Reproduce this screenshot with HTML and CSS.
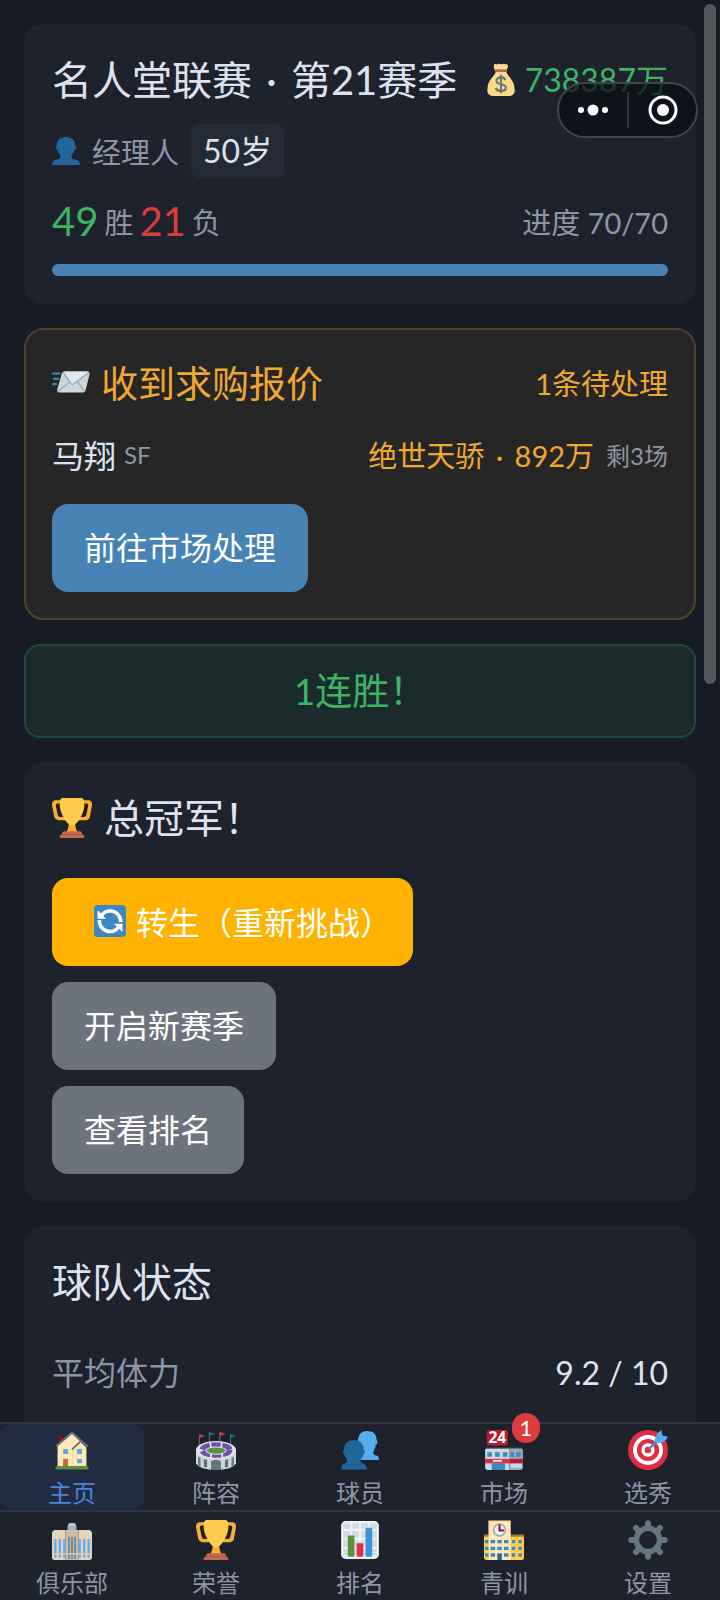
FILE: index.html
```html
<!DOCTYPE html>
<html lang="zh-CN">
<head>
    <meta charset="UTF-8">
    <meta name="viewport" content="width=device-width, initial-scale=1.0">
    <title>名人堂联赛</title>
    <link rel="stylesheet" href="styles.css">
</head>
<body>

<!-- shared icons -->
<svg class="sprite" aria-hidden="true">
    <symbol id="icon-trophy" viewBox="0 0 36 36">
        <path fill="#FFAC33" d="M5.123 5h6C12.227 5 13 4.896 13 6V4c0-1.104-.773-2-1.877-2h-8c-2 0-3.583 2.125-3 5 0 0 1.791 9.375 1.917 9.958C2.373 18.5 4.164 20 6.081 20h6.958c1.105 0-.039-1.896-.039-3v-2c0 1.104-.773 2-1.877 2h-4c-1.104 0-1.833-1.042-2-2S3.539 7.667 3.539 7.667C3.206 5.75 4.018 5 5.123 5zm25.812 0h-6C23.831 5 22 4.896 22 6V4c0-1.104 1.831-2 2.935-2h8c2 0 3.584 2.125 3 5 0 0-1.633 9.419-1.771 10-.354 1.5-2.042 3-4 3h-7.146C21.914 20 22 18.104 22 17v-2c0 1.104 1.831 2 2.935 2h4c1.104 0 1.834-1.042 2-2s1.584-7.333 1.584-7.333C32.851 5.75 32.04 5 30.935 5zM20.832 22c0-6.958-2.709 0-2.709 0s-3-6.958-3 0-3.291 10-3.291 10h12.292c-.001 0-3.292-3.042-3.292-10z"/>
        <path fill="#FFCC4D" d="M29.123 6.577c0 6.775-6.77 18.423-11.123 18.423-4.35 0-11-11.648-11-18.423C7 3.058 7 0 10 0h16c3 0 3.123 3.058 3.123 6.577z"/>
        <path fill="#C1694F" d="M27 33H9v-1c0-1.104 1.164-2 2.206-2h13.917c1.042 0 1.877.896 1.877 2v1z"/>
        <path fill="#C1694F" d="M29 36H7v-1.625C7 33.615 7.738 33 8.498 33h19.25c.759 0 1.252.615 1.252 1.375z"/>
    </symbol>
</svg>

<main class="page">
    <section class="card">
        <div class="row">
            <h1 class="title">名人堂联赛 <span class="dot">·</span> 第21赛季</h1>
            <div class="money">
                <svg class="icon-32" viewBox="0 0 36 36" aria-hidden="true">
                    <path fill="#FDD888" d="M12 9c-1 4-9 10-9 17 0 2-1 4 0 6 1 3 4 4 7 4h16c4 0 6-1 7-4 1-2 0-4 0-6 0-7-8-13-9-17z"/>
                    <path fill="#FDD888" d="M11 7c-1-3-2-6 0-7 2 0 2 1 4 0s3 1 5 0 3 1 4 0c3 1 2 4 0 7z"/>
                    <rect x="11" y="6" width="14" height="3" rx="1.5" fill="#BF6952"/>
                    <path fill="none" stroke="#67757F" stroke-width="2.4" d="M23 18c-1-2-3-3-5-3-3 0-5 1.500-5 4 0 5 10.500 2.500 10.500 7.500 0 2.500-2.500 4-5.500 4-3 0-5-1-6-3.500M18 12v21"/>
                </svg>
                <span>738387万</span>
            </div>
        </div>
        <div class="manager">
            <svg class="icon-28" viewBox="0 0 36 36" aria-hidden="true">
                <path fill="#226699" d="M18 0c8 0 12 5 12 11 1 0 2 1 1 3s-2 3-2 3c-1 4-4 6-4 8 0 3 2 3 5 4 4 1 6 3 6 7H0c0-4 2-6 6-7 3-1 5-1 5-4 0-2-3-4-4-8 0 0-1-1-2-3s0-3 1-3C6 5 10 0 18 0z"/>
            </svg>
            <span>经理人</span>
            <span class="age">50岁</span>
        </div>
        <div class="row record">
            <div class="wins">
                <span class="num green">49</span>
                <span>胜</span>
                <span class="num red">21</span>
                <span>负</span>
            </div>
            <span>进度 70/70</span>
        </div>
        <div class="bar"><div class="bar-fill" style="width: 100%"></div></div>
    </section>

    <section class="card offer">
        <div class="row offer-head">
            <h2 class="offer-title">
                <svg class="icon-38" viewBox="0 0 36 36" aria-hidden="true">
                    <path stroke="#3B88C3" stroke-width="2" stroke-linecap="round" d="M1 10h6M2 15h4M1 20h3"/>
                    <path fill="#CCD6DD" d="M12 8h21c2 0 3 1 2.500 3l-3.500 14c-.5 2-1.500 3-3.500 3H8c-2 0-3.500-1-3-3L9 11c.5-2 1-3 3-3z"/>
                    <path fill="#E1E8ED" d="M11 8h22c1 0 2 .5 2.500 1L21 20c-1 .8-2 .8-3 0z"/>
                    <path fill="none" stroke="#99AAB5" stroke-width="1.3" d="M10.500 9L18 19.500c.8 1 2 1 3 0L35 9M5.500 27l11-9M31 27l-7-9.500"/>
                </svg>
                收到求购报价
            </h2>
            <span>1条待处理</span>
        </div>
        <div class="row offer-item">
            <div class="player">马翔 <small>SF</small></div>
            <div class="price"><span>绝世天骄 <span class="dot">·</span> 892万</span> <small>剩3场</small></div>
        </div>
        <button class="btn blue">前往市场处理</button>
    </section>

    <section class="streak">1连胜！</section>

    <section class="card">
        <h2 class="title champion"><svg class="icon-40" aria-hidden="true"><use href="#icon-trophy"/></svg>总冠军！</h2>
        <div class="actions">
            <button class="btn gold">
                <svg class="icon-32" viewBox="0 0 36 36" aria-hidden="true">
                    <rect width="36" height="36" rx="4" fill="#3B88C3"/>
                    <path fill="none" stroke="#FFF" stroke-width="4" d="M8 13c4-9 19-9 22 4v2M6 17c0 13 15 17 22 7.500"/>
                    <path fill="#FFF" d="M4 6v9.500h9.500zM32 30.500V21h-9.500z"/>
                </svg>
                转生（重新挑战）
            </button>
            <button class="btn">开启新赛季</button>
            <button class="btn">查看排名</button>
        </div>
    </section>

    <section class="card status">
        <h2 class="title">球队状态</h2>
        <div class="row stat">
            <span>平均体力</span>
            <span class="value">9.2 / 10</span>
        </div>
    </section>
</main>

<nav class="tabs">
    <div class="tab-row">
        <a class="tab active" href="#home">
            <svg class="icon-40" viewBox="0 0 36 36" aria-hidden="true">
                <path fill="#A0041E" d="M6 6h4v6H6z"/>
                <path fill="#FFE8B6" d="M5 14L18 3l13 13v17H5z"/>
                <path fill="#FFD983" d="M18 17h1v16h-1z"/>
                <path fill="none" stroke="#66757F" stroke-width="1.8" stroke-linecap="round" d="M4.500 14L18 2.500l13.500 12M18.500 17l6.500-6"/>
                <path fill="#55ACEE" d="M10 17h4.500v4.500H10zM22.500 17H27v4.500h-4.500zM22.500 26H27v4h-4.500z"/>
                <path fill="#C1694F" d="M10 26h4.500v7H10z"/>
                <rect x="3" y="32.500" width="30" height="3" rx="1.5" fill="#5C913B"/>
            </svg>
            <span>主页</span>
        </a>
        <a class="tab" href="#lineup">
            <svg class="icon-40" viewBox="0 0 36 36" aria-hidden="true">
                <path stroke="#66757F" stroke-width=".9" d="M3 4v10M12 2v10M21.500 2v10M31 4v10"/>
                <path fill="#DD2E44" d="M3 3.500l5 2-5 2zM21.500 1.500l5 2-5 2z"/>
                <path fill="#226699" d="M12 1.500l5 2-5 2zM31 3.500l5 2-5 2z"/>
                <path fill="#CCD6DD" d="M0 18v12c2 4 9 6 18 6s16-2 18-6V18z"/>
                <ellipse cx="18" cy="18" rx="18" ry="8" fill="#E1E8ED"/>
                <ellipse cx="18" cy="18" rx="12.5" ry="4.5" fill="none" stroke="#744EAA" stroke-width="5" stroke-dasharray="8 1.5"/>
                <ellipse cx="18" cy="18.5" rx="9.500" ry="3.7" fill="#E1E8ED"/>
                <ellipse cx="18" cy="18.5" rx="8.500" ry="2.8" fill="#5C913B"/>
                <path fill="#66757F" d="M13.500 36v-7c0-3 9-3 9 0v7zM2 24l2 1v8l-2-1zM7 26l3 1v7l-3-1zM34 24l-2 1v8l2-1zM29 26l-3 1v7l3-1z"/>
            </svg>
            <span>阵容</span>
        </a>
        <a class="tab" href="#players">
            <svg class="icon-40" viewBox="0 0 36 36" aria-hidden="true">
                <path fill="#55ACEE" d="M24 1c6 0 9 3 9 8 1 1 1 3 0 4-1 0-1 1-1 2-1 2-2 4-2 6 0 1 1 2 3 2 2 1 2 2 2 4H18c0-2 0-5 1-7l-3-9c0-6 3-10 8-10z"/>
                <path fill="#226699" d="M12.500 9c6 0 9 4 9 9 1 0 1 3 0 3.500-1 2.500-3 4.500-3 6.500s2 2 4 3c1 1 1.500 2.500 1.500 4.500H1c0-2 .5-3.500 1.500-4.500 2-1 4-1 4-3s-2-4-3-6.500c-1-.5-1-3.500 0-3.500 0-5 3-9 9-9z"/>
            </svg>
            <span>球员</span>
        </a>
        <a class="tab" href="#market">
            <span class="badge">1</span>
            <svg class="icon-40" viewBox="0 0 36 36" aria-hidden="true">
                <rect x="2.5" y="0" width="19" height="14" rx="2" fill="#BE1931"/>
                <text x="12" y="11.500" class="shop-sign">24</text>
                <path fill="#66757F" d="M2 16h32v2H2z"/>
                <path fill="#CCD6DD" d="M1 17h22v19H3c-1 0-2-1-2-2z"/>
                <path fill="#99AAB5" d="M23 17h12v17c0 1-1 2-2 2H23z"/>
                <path fill="#3B88C3" d="M3 20h4v4H3zM10 20h4v4h-4zM17 20h4v4h-4zM24 20h3v4h-3zM29 20h4v4h-4zM7 30h12v6H7z"/>
                <path fill="#BBDDF5" d="M2 30h4v5H2zM24 30h10v4H24z"/>
                <path fill="#DD2E44" d="M1 26h22v4H1z"/>
                <path fill="#BE1931" d="M23 26h12v4H23z"/>
                <path fill="#FFF" d="M8 27h8v1.500H8z"/>
            </svg>
            <span>市场</span>
        </a>
        <a class="tab" href="#draft">
            <svg class="icon-40" viewBox="0 0 36 36" aria-hidden="true">
                <circle cx="18" cy="18" r="18" fill="#DD2E44"/>
                <circle cx="18" cy="18" r="13.5" fill="#FFF"/>
                <circle cx="18" cy="18" r="10" fill="#DD2E44"/>
                <circle cx="18" cy="18" r="6" fill="#FFF"/>
                <circle cx="18" cy="18" r="3" fill="#DD2E44"/>
                <path stroke="#3B94D9" stroke-width="2" d="M19 17L31 5"/>
                <path fill="#55ACEE" d="M24 10c0-4 3-8 6-10l1 5 5 1c-2 4-6 6-10 6z"/>
            </svg>
            <span>选秀</span>
        </a>
    </div>
    <div class="tab-row">
        <a class="tab" href="#club">
            <svg class="icon-40" viewBox="0 0 36 36" aria-hidden="true">
                <path fill="#E6D3BC" d="M0 11l2-2h10v27H2c-1 0-2-1-2-2zM24 9h10l2 2v23c0 1-1 2-2 2H24z"/>
                <path fill="#D0BBA4" d="M12 9h12v27H12z"/>
                <path fill="#9BB3C4" d="M14 6c0-4 8-4 8 0v3h-8z"/>
                <path fill="#CCD6DD" d="M15 3h6v2h-6z"/>
                <path fill="#5DADEC" d="M2 17h2v17H2zM6 17h2v17H6zM10 17h2v17h-2zM24 17h2v17h-2zM28 17h2v17h-2zM32 17h2v17h-2z"/>
                <path fill="#66859B" d="M14.500 15H16v20h-1.500zM17.200 15h1.600v20h-1.600zM20 15h1.500v20H20z"/>
                <path fill="#E6D3BC" d="M0 30h36v1H0z"/>
            </svg>
            <span>俱乐部</span>
        </a>
        <a class="tab" href="#honor">
            <svg class="icon-40" aria-hidden="true"><use href="#icon-trophy"/></svg>
            <span>荣誉</span>
        </a>
        <a class="tab" href="#rank">
            <svg class="icon-40" viewBox="0 0 36 36" aria-hidden="true">
                <rect x="1" y="1" width="34" height="34" rx="4" fill="#F0F3F5"/>
                <path fill="#D3DCE2" d="M3 3h6v5H3zM11 3h6v5h-6zM19 3h6v5h-6zM27 3h6v5h-6zM3 10h6v6H3zM11 10h6v6h-6zM19 10h6v6h-6zM27 10h6v6h-6zM3 18h6v6H3zM11 18h6v6h-6zM19 18h6v6h-6zM27 18h6v6h-6zM3 26h6v6H3zM11 26h6v6h-6zM19 26h6v6h-6zM27 26h6v6h-6z"/>
                <rect x="7" y="14" width="6" height="19" rx="1" fill="#5C913B"/>
                <rect x="15" y="21" width="6" height="12" rx="1" fill="#DD2E44"/>
                <rect x="23" y="7" width="6" height="26" rx="1" fill="#3B94D9"/>
            </svg>
            <span>排名</span>
        </a>
        <a class="tab" href="#youth">
            <svg class="icon-40" viewBox="0 0 36 36" aria-hidden="true">
                <path fill="#FFCC4D" d="M0 14h36v20c0 1-1 2-2 2H2c-1 0-2-1-2-2z"/>
                <path fill="#A57939" d="M0 13h36v2H0zM4 0h20v2H4z"/>
                <path fill="#FFE8B6" d="M4 1h20v35H4z"/>
                <circle cx="14" cy="9" r="6" fill="#99AAB5"/>
                <circle cx="14" cy="9" r="4.5" fill="#F5F8FA"/>
                <path fill="none" stroke="#A0041E" stroke-width="1.8" d="M14 4v5.500h4"/>
                <path fill="#3B88C3" d="M1 18h3v3H1zM6 18h4v3H6zM12 18h4v3h-4zM18 18h4v3h-4zM25 18h3v3h-3zM31 18h3v3h-3zM1 24h3v3H1zM6 24h4v3H6zM12 24h4v3h-4zM18 24h4v3h-4zM25 24h3v3h-3zM31 24h3v3h-3zM1 30h3v3H1zM6 30h4v3H6zM18 30h4v3h-4zM25 30h3v3h-3zM31 30h3v3h-3z"/>
                <path fill="#226699" d="M12 30h4v6h-4z"/>
            </svg>
            <span>青训</span>
        </a>
        <a class="tab" href="#settings">
            <svg class="icon-40" viewBox="0 0 36 36" aria-hidden="true">
                <circle cx="18" cy="18" r="10.5" fill="none" stroke="#66757F" stroke-width="5"/>
                <path stroke="#66757F" stroke-width="5.5" stroke-linecap="round" d="M18 3v3M18 30v3M3 18h3M30 18h3M7.300 7.300l2.200 2.200M26.500 26.500l2.200 2.200M7.300 28.700l2.200-2.200M26.500 9.500l2.200-2.200"/>
            </svg>
            <span>设置</span>
        </a>
    </div>
</nav>

<!-- mini program capsule -->
<div class="capsule">
    <button class="capsule-btn" aria-label="更多">
        <svg width="32" height="32" viewBox="0 0 32 32"><g fill="#fff"><circle cx="4" cy="16" r="3"/><circle cx="16" cy="16" r="5.5"/><circle cx="28" cy="16" r="3"/></g></svg>
    </button>
    <button class="capsule-btn" aria-label="关闭">
        <svg width="32" height="32" viewBox="0 0 32 32"><circle cx="17" cy="16" r="13" fill="none" stroke="#fff" stroke-width="3"/><circle cx="17" cy="16" r="6" fill="#fff"/></svg>
    </button>
</div>

<div class="scroll-thumb"></div>

</body>
</html>
```
FILE: styles.css
```css
* {
    box-sizing: border-box;
}
body {
    margin: 0;
    height: 100vh;
    display: flex;
    flex-direction: column;
    overflow: hidden;
    font-family: Lato, "Noto Sans CJK SC", sans-serif;
    font-size: 32px;
    background: #171b26;
    color: #dde2f1;
}
h1, h2 {
    margin: 0;
    font-weight: normal;
}
svg {
    display: block;
    flex-shrink: 0;
    overflow: visible;
}
.sprite {
    position: absolute;
    width: 0;
    height: 0;
}
.icon-28 {
    width: 28px;
    height: 28px;
}
.icon-32 {
    width: 32px;
    height: 32px;
}
.icon-38 {
    width: 38px;
    height: 38px;
}
.icon-40 {
    width: 40px;
    height: 40px;
}

.page {
    flex: 1;
    min-height: 0;
    overflow-y: auto;
    scrollbar-width: none;
    padding: 24px;
    display: flex;
    flex-direction: column;
    gap: 24px;
}
.card {
    flex-shrink: 0;
    padding: 28px;
    border-radius: 20px;
    background: #1d222d;
}
.row {
    display: flex;
    justify-content: space-between;
    align-items: center;
    white-space: nowrap;
}
.title {
    font-size: 40px;
    line-height: 56px;
}
.dot {
    margin: 0 4px;
}
.money {
    display: flex;
    align-items: center;
    gap: 8px;
    line-height: 56px;
    color: #3cb464;
}
.manager {
    display: flex;
    align-items: center;
    gap: 12px;
    margin: 16px 0;
    font-size: 29px;
    color: #8f95a8;
}
.age {
    padding: 0 12px;
    border-radius: 8px;
    font-size: 32px;
    line-height: 54px;
    background: #252a37;
    color: #dde2f1;
}
.record {
    height: 54px;
    margin-bottom: 16px;
    font-size: 29px;
    color: #8f95a8;
}
.wins {
    display: flex;
    align-items: center;
    gap: 6px;
}
.num {
    font-size: 40px;
}
.green {
    color: #3cb464;
}
.red {
    color: #dc3c3e;
}
.bar {
    height: 12px;
    border-radius: 6px;
    overflow: hidden;
    background: #2a3040;
}
.bar-fill {
    height: 100%;
    background: #4682b4;
}

.offer {
    padding: 26px;
    border: 2px solid #51432b;
    background: #262626;
}
.offer-head {
    height: 52px;
    font-size: 29px;
    color: #f0a830;
}
.offer-title {
    display: flex;
    align-items: center;
    gap: 11px;
    font-size: 37px;
}
.offer-item {
    height: 48px;
    margin: 22px 0 26px;
}
.player, .price {
    display: flex;
    align-items: center;
    gap: 8px;
}
.price {
    gap: 12px;
    font-size: 29px;
    color: #f0a830;
}
.offer-item small {
    font-size: 24px;
    color: #8f95a8;
}

.btn {
    display: flex;
    align-items: center;
    height: 88px;
    padding: 0 32px 4px;
    border: none;
    border-radius: 16px;
    font-family: inherit;
    font-size: 32px;
    background: #6c737d;
    color: #fff;
    cursor: pointer;
}
.blue {
    background: #4682b4;
}
.gold {
    gap: 10px;
    padding: 0 21px 2px 42px;
    background: #ffb300;
}
.streak {
    flex-shrink: 0;
    border: 2px solid #22483a;
    border-radius: 16px;
    line-height: 90px;
    font-size: 37px;
    text-align: center;
    background: #1b2b2c;
    color: #3cb464;
}
.champion {
    display: flex;
    align-items: center;
    gap: 12px;
    margin-bottom: 32px;
}
.actions {
    display: flex;
    flex-direction: column;
    align-items: flex-start;
    gap: 16px;
}
.status {
    min-height: 260px;
}
.stat {
    margin-top: 32px;
    line-height: 62px;
    color: #8f95a8;
}
.value {
    color: #dde2f1;
}

.tabs {
    position: relative;
    background: #1d222d;
}
.tab-row {
    display: flex;
    border-top: 2px solid #31353f;
}
.tab {
    position: relative;
    flex: 1;
    display: flex;
    flex-direction: column;
    align-items: center;
    gap: 6px;
    padding: 6px 0 0;
    border-radius: 12px;
    font-size: 24px;
    line-height: 34px;
    text-decoration: none;
    color: #8f95a8;
}
.tab-row:last-child .tab {
    padding-top: 8px;
}
.tab.active {
    background: #212c42;
    color: #4a84d8;
}
.badge {
    position: absolute;
    top: -11px;
    right: 36px;
    width: 28px;
    height: 30px;
    border-radius: 15px;
    font-size: 22px;
    line-height: 30px;
    text-align: center;
    background: #dc3c3c;
    color: #fff;
}
.shop-sign {
    font-family: "Open Sans", sans-serif;
    font-size: 14px;
    font-weight: bold;
    text-anchor: middle;
    fill: #fff;
}

.capsule {
    position: fixed;
    top: 82px;
    right: 22px;
    width: 141px;
    height: 56px;
    display: flex;
    border: 2px solid #41434d;
    border-radius: 28px;
    background: rgba(12, 14, 22, 0.75);
}
.capsule-btn {
    flex: 1;
    display: flex;
    align-items: center;
    justify-content: center;
    margin: 8px 0;
    padding: 0;
    border: none;
    background: none;
    cursor: pointer;
}
.capsule-btn + .capsule-btn {
    border-left: 2px solid #34363f;
}
.scroll-thumb {
    position: fixed;
    top: 4px;
    right: 4px;
    width: 12px;
    height: 680px;
    border-radius: 6px;
    background: #55565a;
}
```
